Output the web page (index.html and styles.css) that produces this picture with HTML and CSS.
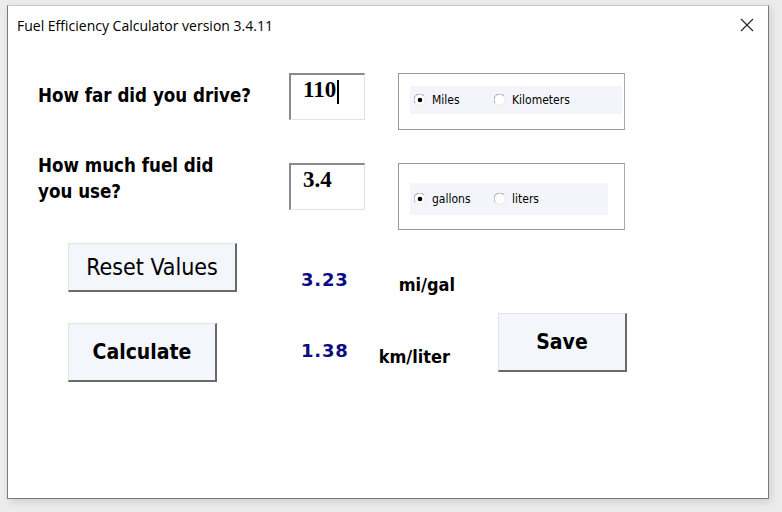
FILE: index.html
```html
<!DOCTYPE html>
<html>
<head>
<meta charset="utf-8">
<link rel="stylesheet" href="styles.css">
</head>
<body>
<div class="window">
  <div class="titlebar">
    <span class="title">Fuel Efficiency Calculator version 3.4.11</span>
    <svg class="close" width="14" height="14" viewBox="0 0 14 14"><path d="M1 1 L13 13 M13 1 L1 13" stroke="#222" stroke-width="1.1" fill="none"/></svg>
  </div>
  <div class="content">
    <div class="row row1">
      <div class="label">How far did you drive?</div>
      <div class="textbox"><span class="value">110</span><span class="caret"></span></div>
      <div class="frame frame1">
        <div class="panel">
          <span class="opt opt-miles"><svg class="radio" width="12" height="12" viewBox="0 0 12 12"><circle cx="6" cy="6" r="5.5" fill="#fff"/><path d="M10 2 A5.5 5.5 0 0 0 1.2 9.2" stroke="#a0a0a0" fill="none"/><path d="M1.2 9.2 A5.5 5.5 0 0 0 10 2" stroke="#e8e8e8" fill="none"/><circle cx="6" cy="6" r="2.3" fill="#000"/></svg>Miles</span>
          <span class="opt"><svg class="radio" width="12" height="12" viewBox="0 0 12 12"><circle cx="6" cy="6" r="5.5" fill="#fff"/><path d="M10 2 A5.5 5.5 0 0 0 1.2 9.2" stroke="#a0a0a0" fill="none"/><path d="M1.2 9.2 A5.5 5.5 0 0 0 10 2" stroke="#e8e8e8" fill="none"/></svg>Kilometers</span>
        </div>
      </div>
    </div>
    <div class="row row2">
      <div class="label label2">How much fuel did<br>you use?</div>
      <div class="textbox"><span class="value">3.4</span></div>
      <div class="frame frame2">
        <div class="panel panel2">
          <span class="opt opt-gal"><svg class="radio" width="12" height="12" viewBox="0 0 12 12"><circle cx="6" cy="6" r="5.5" fill="#fff"/><path d="M10 2 A5.5 5.5 0 0 0 1.2 9.2" stroke="#a0a0a0" fill="none"/><path d="M1.2 9.2 A5.5 5.5 0 0 0 10 2" stroke="#e8e8e8" fill="none"/><circle cx="6" cy="6" r="2.3" fill="#000"/></svg>gallons</span>
          <span class="opt"><svg class="radio" width="12" height="12" viewBox="0 0 12 12"><circle cx="6" cy="6" r="5.5" fill="#fff"/><path d="M10 2 A5.5 5.5 0 0 0 1.2 9.2" stroke="#a0a0a0" fill="none"/><path d="M1.2 9.2 A5.5 5.5 0 0 0 10 2" stroke="#e8e8e8" fill="none"/></svg>liters</span>
        </div>
      </div>
    </div>
    <div class="row row3">
      <button class="btn btn-reset">Reset Values</button>
      <div class="result r1">3.23</div>
      <div class="unit u1">mi/gal</div>
    </div>
    <div class="row row4">
      <button class="btn btn-calc">Calculate</button>
      <div class="result r2">1.38</div>
      <div class="unit u2">km/liter</div>
      <button class="btn btn-save">Save</button>
    </div>
  </div>
</div>
</body>
</html>
```

FILE: styles.css
```css
html, body {
  margin: 0;
  padding: 0;
}
body {
  width: 782px;
  height: 512px;
  background: #ececec;
  overflow: hidden;
}
.window {
  margin: 5px 0 0 7px;
  width: 760px;
  height: 492px;
  background: #fff;
  border: 1px solid #7a7a7a;
  border-top-color: #c8c8c8;
  box-shadow: 2px 3px 8px rgba(0,0,0,0.12);
}
.titlebar {
  height: 40px;
  display: flex;
  align-items: center;
  justify-content: space-between;
  padding: 0 14px 0 9px;
}
.title {
  font-family: "Open Sans", "Noto Sans", sans-serif;
  font-size: 14px;
  color: #000;
  margin-top: -2px;
}
.close {
  margin-top: -2px;
}
.content {
  padding-left: 30px;
}
.row {
  display: flex;
  align-items: flex-start;
}
.row1 {
  margin-top: 27px;
}
.label {
  width: 251px;
  font-family: "DejaVu Sans Condensed", "DejaVu Sans", sans-serif;
  font-weight: bold;
  font-size: 18.6px;
  color: #000;
}
.row1 .label {
  padding-top: 12px;
}
.label2 {
  line-height: 26px;
  margin-top: -10px;
}
.textbox {
  height: 44px;
  border-top: 2px solid #8a8a8a;
  border-left: 2px solid #8a8a8a;
  border-right: 1px solid #e2e2e2;
  border-bottom: 1px solid #e2e2e2;
  display: flex;
  align-items: flex-start;
  padding-left: 12px;
  box-sizing: content-box;
  width: 61px;
}
.value {
  font-family: "Liberation Serif", serif;
  font-weight: bold;
  font-size: 23px;
  margin-top: 2px;
}
.caret {
  display: inline-block;
  width: 2px;
  height: 24px;
  background: #000;
  margin-top: 5px;
  margin-left: 1px;
}
.frame {
  margin-left: 33px;
  width: 225px;
  border: 1px solid #999;
  border-right-color: #a8a8a8;
}
.frame1 {
  height: 55px;
}
.frame2 {
  height: 65px;
}
.panel {
  margin: 12px 0 0 11px;
  width: 212px;
  height: 28px;
  background: #f3f5fa;
  display: flex;
  align-items: center;
}
.panel2 {
  margin-top: 19px;
  width: 198px;
  height: 32px;
}
.opt {
  display: flex;
  align-items: center;
  font-family: "DejaVu Sans Condensed", "DejaVu Sans", sans-serif;
  font-size: 12px;
  color: #000;
}
.radio {
  margin-left: 4px;
  margin-right: 6px;
}
.opt-miles {
  width: 80px;
}
.opt-gal {
  width: 80px;
}
.row2 {
  margin-top: 33px;
}
.row3 {
  margin-top: 13px;
}
.btn {
  margin: 0 0 0 30px;
  padding: 0;
  background: #f3f6fb;
  border-top: 1px solid #e3e3e3;
  border-left: 1px solid #e3e3e3;
  border-right: 2px solid #6a6a6a;
  border-bottom: 2px solid #6a6a6a;
  font-family: "DejaVu Sans Condensed", "DejaVu Sans", sans-serif;
  color: #000;
  box-sizing: border-box;
}
.btn-reset {
  width: 169px;
  height: 49px;
  font-size: 23px;
  font-weight: normal;
}
.btn-calc {
  margin-top: 10px;
  width: 149px;
  height: 59px;
  font-size: 21px;
  font-weight: bold;
}
.btn-save {
  width: 129px;
  height: 59px;
  font-size: 21px;
  font-weight: bold;
  padding-bottom: 0;
}
.result {
  font-family: "DejaVu Sans", sans-serif;
  font-weight: bold;
  font-size: 18px;
  letter-spacing: 0.8px;
  color: #0c0c80;
}
.r1 {
  margin-left: 64px;
  margin-top: 26px;
}
.r2 {
  margin-left: 84px;
  margin-top: 27px;
}
.unit {
  font-family: "DejaVu Sans Condensed", "DejaVu Sans", sans-serif;
  font-weight: bold;
  font-size: 18px;
  color: #000;
}
.u1 {
  margin-left: 50px;
  margin-top: 31px;
}
.u2 {
  margin-left: 30px;
  margin-top: 33px;
}
.row4 {
  margin-top: 18px;
}
.row4 .btn-save {
  margin-left: 48px;
}
```
